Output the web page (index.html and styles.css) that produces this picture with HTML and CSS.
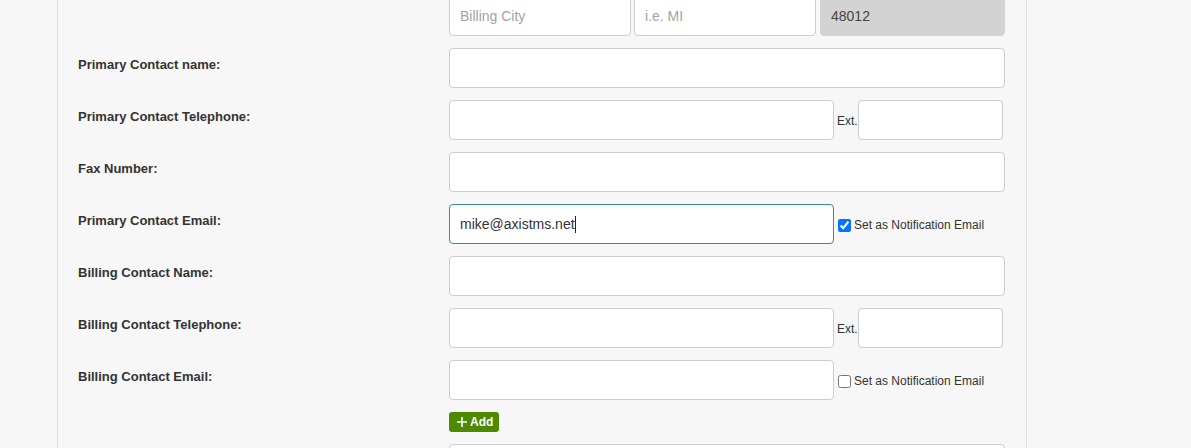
FILE: index.html
```html
<!DOCTYPE html>
<html lang="en">
<head>
    <meta charset="UTF-8">
    <title>Customer Contacts</title>
    <link rel="stylesheet" href="styles.css">
</head>
<body>
    <div class="panel">
        <!-- address tail -->
        <div class="row first-row">
            <div class="label"></div>
            <div class="field split">
                <input class="input city" type="text" placeholder="Billing City">
                <input class="input state" type="text" placeholder="i.e. MI">
                <input class="input zip" type="text" value="48012" disabled>
            </div>
        </div>

        <div class="row">
            <div class="label">Primary Contact name:</div>
            <div class="field"><input class="input" type="text"></div>
        </div>

        <div class="row">
            <div class="label">Primary Contact Telephone:</div>
            <div class="field split">
                <input class="input phone" type="text">
                <span class="ext">Ext.</span>
                <input class="input ext-input" type="text">
            </div>
        </div>

        <div class="row">
            <div class="label">Fax Number:</div>
            <div class="field"><input class="input" type="text"></div>
        </div>

        <div class="row">
            <div class="label">Primary Contact Email:</div>
            <div class="field split">
                <div class="input phone focused">mike@axistms.net<span class="caret"></span></div>
                <label class="notify"><input type="checkbox" checked> Set as Notification Email</label>
            </div>
        </div>

        <div class="row">
            <div class="label">Billing Contact Name:</div>
            <div class="field"><input class="input" type="text"></div>
        </div>

        <div class="row">
            <div class="label">Billing Contact Telephone:</div>
            <div class="field split">
                <input class="input phone" type="text">
                <span class="ext">Ext.</span>
                <input class="input ext-input" type="text">
            </div>
        </div>

        <div class="row">
            <div class="label">Billing Contact Email:</div>
            <div class="field split">
                <input class="input phone" type="text">
                <label class="notify"><input type="checkbox"> Set as Notification Email</label>
            </div>
        </div>

        <div class="row">
            <div class="label"></div>
            <div class="field">
                <button class="add-button">
                    <svg width="10" height="10" viewBox="0 0 10 10"><path d="M5 0v10M0 5h10" stroke="#fff" stroke-width="1.6"/></svg>
                    Add
                </button>
            </div>
        </div>

        <div class="row">
            <div class="label"></div>
            <div class="field"><input class="input" type="text"></div>
        </div>
    </div>
</body>
</html>
```

FILE: styles.css
```css
body {
    margin: 0;
    background-color: #f7f7f7;
    font-family: "Liberation Sans", Arial, sans-serif;
    color: #333;
    overflow: hidden;
}

.panel {
    margin-left: 57px;
    width: 970px;
    border-left: 1px solid #dedede;
    border-right: 1px solid #dedede;
    padding: 0 20px;
    box-sizing: border-box;
    min-height: 448px;
}

.row {
    display: flex;
    margin-bottom: 12px;
}

.first-row {
    margin-top: -4px;
}

.label {
    width: 371px;
    flex-shrink: 0;
    font-size: 13px;
    font-weight: bold;
    line-height: 16px;
    padding-top: 9px;
    color: #333;
}

.field {
    width: 556px;
}

.split {
    display: flex;
    align-items: center;
}

.input {
    display: block;
    width: 100%;
    height: 40px;
    box-sizing: border-box;
    border: 1px solid #ccc;
    border-radius: 4px;
    background-color: #fff;
    padding: 0 10px;
    font-family: "Liberation Sans", Arial, sans-serif;
    font-size: 14px;
    color: #333;
    outline: none;
}

.input::placeholder {
    color: #a3a3a3;
}

.city {
    width: 182px;
    margin-right: 3px;
}

.state {
    width: 182px;
    margin-right: 4px;
}

.zip {
    width: 185px;
    background-color: #d3d3d3;
    border-color: #d3d3d3;
    color: #444;
}

.phone {
    width: 385px;
    flex-shrink: 0;
}

.focused {
    border-color: #3b87a8;
    line-height: 38px;
    color: #333;
}

.caret {
    display: inline-block;
    width: 1px;
    height: 17px;
    background-color: #222;
    vertical-align: -4px;
}

.ext {
    font-size: 12px;
    color: #333;
    margin: 0 0 0 3px;
    padding-top: 1px;
}

.ext-input {
    width: 145px;
    flex-shrink: 0;
}

.notify {
    display: flex;
    align-items: center;
    font-size: 12px;
    color: #333;
    margin-left: 3px;
    padding-top: 2px;
}

.notify input {
    width: 13px;
    height: 13px;
    margin: 0 3px 0 1px;
    accent-color: #0075ff;
}

.add-button {
    display: flex;
    align-items: center;
    gap: 3px;
    height: 20px;
    width: 50px;
    padding: 0 0 0 8px;
    border: none;
    border-radius: 3px;
    background-color: #4d8a00;
    color: #fff;
    font-family: "Liberation Sans", Arial, sans-serif;
    font-size: 12px;
    font-weight: bold;
    cursor: pointer;
}
```
